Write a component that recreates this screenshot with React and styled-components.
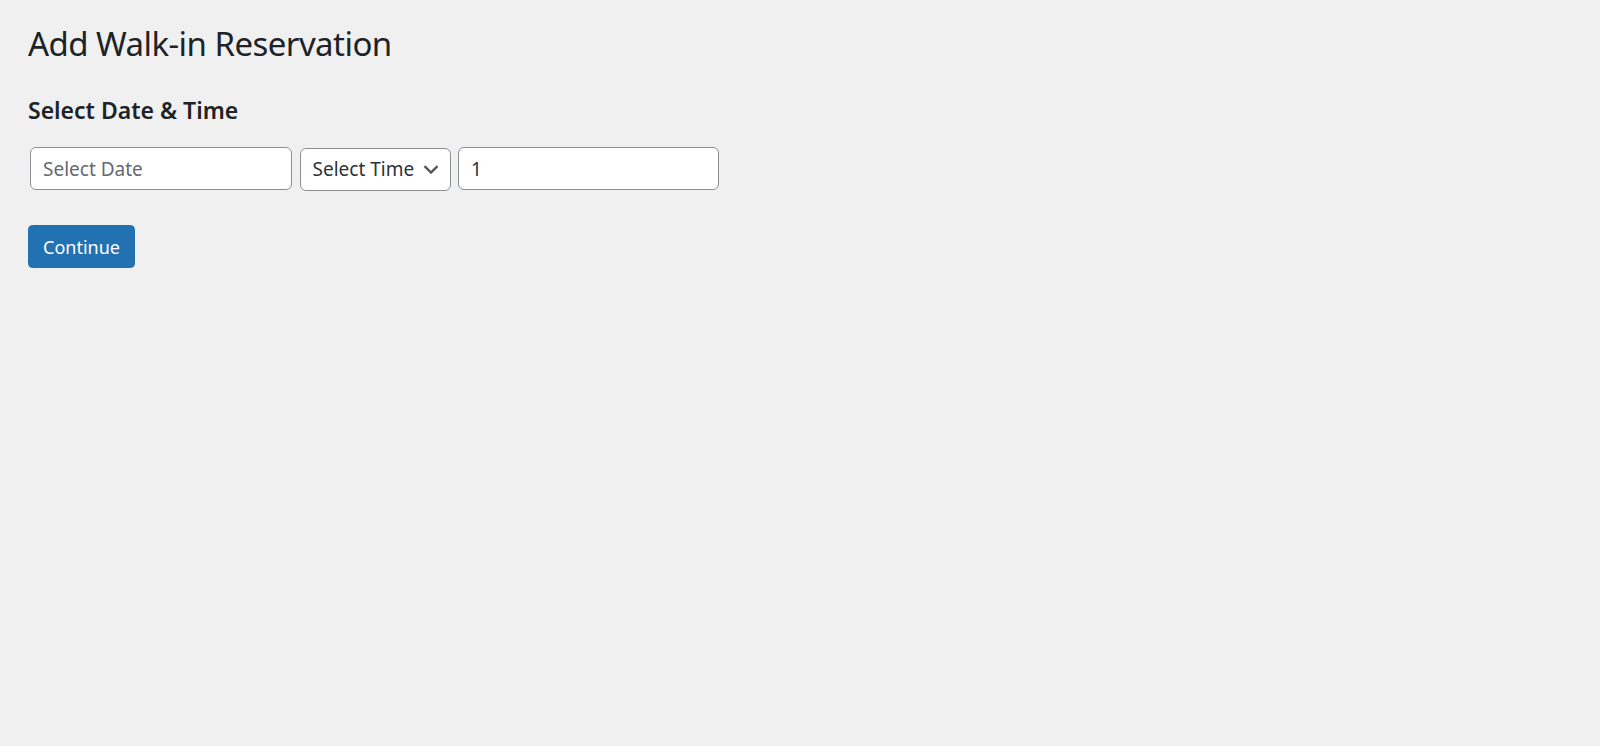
import React from "react";
import styled, { createGlobalStyle } from "styled-components";

const Global = createGlobalStyle`
  html, body { margin: 0; padding: 0; }
  body {
    background: #f0f0f1;
    font-family: "Noto Sans", "Open Sans", sans-serif;
    color: #1d2327;
  }
  * { box-sizing: border-box; }
`;

const Wrap = styled.div`
  padding: 22px 28px 0 28px;
`;

const Title = styled.h1`
  margin: 0;
  font-size: 33px;
  line-height: 44px;
  letter-spacing: -0.55px;
  font-weight: 400;
  color: #1d2327;
`;

const SubTitle = styled.h2`
  margin: 29px 0 0 0;
  font-size: 23px;
  line-height: 30px;
  font-weight: 600;
  color: #1d2327;
`;

const Row = styled.div`
  display: flex;
  align-items: flex-start;
  gap: 7.5px;
  margin: 22px 0 0 2px;
`;

const TextInput = styled.input`
  width: ${(p) => p.$w}px;
  height: 43px;
  margin: 0;
  padding: 0 12px;
  border: 1px solid #8c8f94;
  border-radius: 6px;
  background: #fff;
  color: #2c3338;
  font-family: inherit;
  font-size: 19px;
  outline: none;
  &::placeholder { color: #646970; opacity: 1; }
`;

const SelectBox = styled.div`
  position: relative;
  width: 151px;
  height: 43.5px;
  margin-top: 0.5px;
  border: 1px solid #8c8f94;
  border-radius: 6px;
  background: #fff;
  color: #2c3338;
  display: flex;
  align-items: center;
  padding: 0 0 0 12px;
  font-size: 19px;
`;

const Chevron = styled.svg`
  position: absolute;
  right: 11px;
  top: 50%;
  margin-top: -4px;
`;

const Button = styled.button`
  margin-top: 34px;
  height: 43px;
  padding: 0 14px;
  background: #2271b1;
  border: 1px solid #2271b1;
  border-radius: 4.5px;
  color: #fff;
  font-family: inherit;
  font-size: 18px;
  cursor: pointer;
`;

export default function App() {
  return (
    <>
      <Global />
      <Wrap>
        <Title>Add Walk-in Reservation</Title>
        <SubTitle>Select Date &amp; Time</SubTitle>
        <Row>
          <TextInput $w={262} placeholder="Select Date" />
          <SelectBox>
            Select Time
            <Chevron width="16" height="9" viewBox="0 0 16 9">
              <path d="M1.5 1.2 L8 7.5 L14.5 1.2" fill="none" stroke="#50575e" strokeWidth="2.4" />
            </Chevron>
          </SelectBox>
          <TextInput $w={261} defaultValue="1" />
        </Row>
        <Button>Continue</Button>
      </Wrap>
    </>
  );
}
